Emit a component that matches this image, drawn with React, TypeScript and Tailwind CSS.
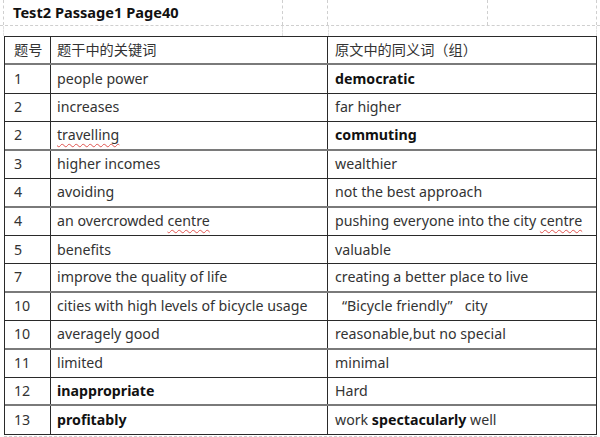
import React from 'react';

type Row = {
  no: string;
  key: React.ReactNode;
  syn: React.ReactNode;
  thick?: boolean;
};

const Squiggle = ({ children }: { children: React.ReactNode }) => (
  <span className="underline decoration-wavy decoration-[#e0544f] decoration-1 underline-offset-[3px]">{children}</span>
);

const rows: Row[] = [
  { no: '1', key: 'people power', syn: <b className="font-bold text-[#111]">democratic</b> },
  { no: '2', key: 'increases', syn: 'far higher' },
  { no: '2', key: <Squiggle>travelling</Squiggle>, syn: <b className="font-bold text-[#111]">commuting</b>, thick: true },
  { no: '3', key: 'higher incomes', syn: 'wealthier' },
  { no: '4', key: 'avoiding', syn: 'not the best approach', thick: true },
  {
    no: '4',
    key: <>an overcrowded <Squiggle>centre</Squiggle></>,
    syn: <>pushing everyone into the city <Squiggle>centre</Squiggle></>,
  },
  { no: '5', key: 'benefits', syn: 'valuable' },
  { no: '7', key: 'improve the quality of life', syn: 'creating a better place to live', thick: true },
  {
    no: '10',
    key: 'cities with high levels of bicycle usage',
    syn: (
      <>
        <span className="pl-[7px]">“Bicycle friendly”</span>
        <span className="pl-[12px]">city</span>
      </>
    ),
  },
  { no: '10', key: 'averagely good', syn: 'reasonable,but no special', thick: true },
  { no: '11', key: 'limited', syn: 'minimal' },
  { no: '12', key: <b className="font-bold text-[#111]">inappropriate</b>, syn: 'Hard', thick: true },
  {
    no: '13',
    key: <b className="font-bold text-[#111]">profitably</b>,
    syn: <>work <b className="font-bold text-[#111]">spectacularly</b> well</>,
  },
];

const TableRow = ({ row, header }: { row: Row; header?: boolean }) => (
  <div
    className={
      'flex h-[28.43px] items-center ' +
      (row.thick || header ? 'border-b-2 border-[#7a7a7a]' : 'border-b border-[#2a2a2a]')
    }
  >
    <div className="flex h-full w-[46px] items-center border-r border-[#2a2a2a] pl-[9px]">
      <span>{row.no}</span>
    </div>
    <div className="flex h-full w-[277px] items-center whitespace-nowrap border-r border-[#2a2a2a] pl-[6px]">
      <span>{row.key}</span>
    </div>
    <div className="flex h-full flex-1 items-center whitespace-nowrap pl-[7px]">
      <span>{row.syn}</span>
    </div>
  </div>
);

export default function App() {
  return (
    <div
      className="h-[437px] w-[600px] overflow-hidden bg-white text-[14.2px] leading-none text-[#333]"
      style={{ fontFamily: '"Noto Sans", "Noto Sans CJK SC", sans-serif' }}
    >
      {/* sheet title row with grid lines */}
      <div className="flex h-[26px] border-b border-dashed border-[#cfcfcf]">
        <div className="ml-[3px] flex w-[280px] items-center border-l border-r border-dashed border-[#cfcfcf] pl-[9px]">
          <span className="whitespace-nowrap text-[14.6px] font-bold text-[#111]">Test2 Passage1 Page40</span>
        </div>
        <div className="w-[45px] border-r border-dashed border-[#cfcfcf]" />
        <div className="w-[160px] border-r border-dashed border-[#cfcfcf]" />
        <div className="w-[109px] border-r border-dashed border-[#cfcfcf]" />
      </div>
      <div className="flex h-[10px]">
        <div className="ml-[3px] w-[280px] border-l border-r border-dashed border-[#e0e0e0]" />
        <div className="w-[45px]" />
        <div className="w-[160px] border-l border-dashed border-[#e0e0e0]" />
        <div className="w-[109px] border-r border-dashed border-[#e0e0e0]" />
      </div>

      <div className="ml-[4px] w-[593px] border-x border-t border-[#2a2a2a]">
        <TableRow header row={{ no: '题号', key: '题干中的关键词', syn: '原文中的同义词（组）' }} />
        {rows.map((r, i) => (
          <TableRow key={i} row={r} />
        ))}
      </div>
      <div className="ml-[4px] h-[2px] w-[593px] border-b border-dashed border-[#cfcfcf]" />
    </div>
  );
}
